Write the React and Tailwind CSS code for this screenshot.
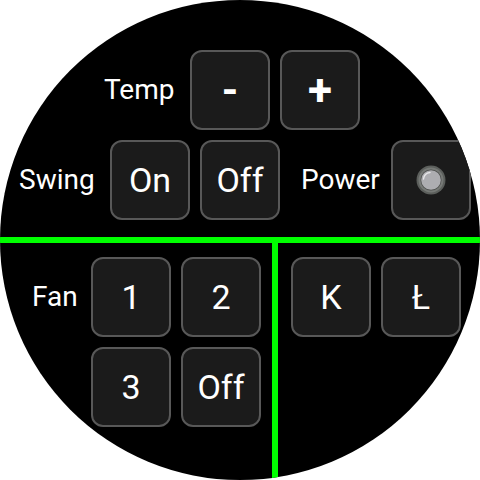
import React from 'react';

const Btn = ({ children, className = '' }) => (
  <div
    className={`w-[80px] h-[80px] shrink-0 rounded-[12px] border-2 border-[#585858] bg-[#1b1b1b] flex items-center justify-center text-[34px] text-white ${className}`}
  >
    {children}
  </div>
);

const Label = ({ children, className = '' }) => (
  <span className={`text-[28px] text-white leading-none ${className}`}>{children}</span>
);

const PowerLed = () => (
  <svg width="30" height="30" viewBox="0 0 30 30">
    <circle cx="15" cy="15" r="14.5" fill="#5c5f5c" />
    <circle cx="15" cy="15" r="12.5" fill="#767976" />
    <circle cx="15" cy="15" r="10.5" fill="#4a4c4a" />
    <circle cx="15" cy="15" r="9.8" fill="#adadb1" />
    <path d="M7.5 14 A7.5 7.5 0 0 1 14 7.5" fill="none" stroke="#e6e6e8" strokeWidth="1.4" strokeLinecap="round" />
  </svg>
);

const App = () => {
  return (
    <div className="w-[480px] h-[480px] bg-white">
      <div className="w-[480px] h-[480px] rounded-full bg-black overflow-hidden flex flex-col font-['Roboto',sans-serif] text-white">
        {/* top panel */}
        <div className="h-[237px] shrink-0 pt-[50px] flex flex-col gap-[10px]">
          <div className="flex items-center h-[80px] pl-[104px]">
            <Label className="w-[71px]">Temp</Label>
            <Btn className="ml-[15px] text-[42px] font-bold">-</Btn>
            <Btn className="ml-[10px] text-[44px] font-bold">+</Btn>
          </div>
          <div className="flex items-center h-[80px] pl-[19px]">
            <Label className="w-[76px]">Swing</Label>
            <Btn className="ml-[15px]">On</Btn>
            <Btn className="ml-[10px]">Off</Btn>
            <Label className="ml-[21px] w-[78px]">Power</Label>
            <Btn className="ml-[12px]">
              <PowerLed />
            </Btn>
          </div>
        </div>

        <div className="h-[6px] shrink-0 bg-[#00ff00]" />

        {/* bottom panels */}
        <div className="flex flex-1">
          <div className="w-[272px] shrink-0 pt-[14px] pl-[32px] flex items-start">
            <div className="w-[59px] h-[80px] flex items-center">
              <Label>Fan</Label>
            </div>
            <div className="grid grid-cols-2 gap-[10px]">
              <Btn>1</Btn>
              <Btn>2</Btn>
              <Btn>3</Btn>
              <Btn>Off</Btn>
            </div>
          </div>
          <div className="w-[6px] shrink-0 bg-[#00ff00]" />
          <div className="flex-1 pt-[14px] pl-[13px] flex items-start gap-[10px]">
            <Btn>K</Btn>
            <Btn>Ł</Btn>
          </div>
        </div>
      </div>
    </div>
  );
};

export default App;
